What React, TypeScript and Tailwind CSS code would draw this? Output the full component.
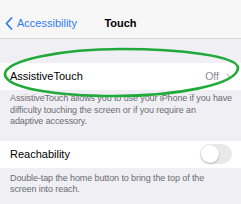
import React from 'react';

function BackChevron() {
  return (
    <svg width="8" height="13" viewBox="0 0 8 13" fill="none">
      <path d="M6.5 1L1.5 6.5L6.5 12" stroke="#2f7cf6" strokeWidth={1.8} strokeLinecap="round" strokeLinejoin="round" />
    </svg>
  );
}

function Toggle() {
  return (
    <div className="w-[32px] h-[20px] rounded-full bg-[#e9e9ea] p-[1px] flex items-center">
      <div className="w-[18px] h-[18px] rounded-full bg-white shadow-[0_1px_2px_rgba(0,0,0,0.25)]" />
    </div>
  );
}

export default function App() {
  return (
    <div className="relative w-[241px] h-[204px] overflow-hidden bg-[#efeff4] font-['Liberation_Sans',Arial,sans-serif]">
      {/* nav bar */}
      <div className="h-[39px] bg-[#f7f7f7] border-b border-[#d6d6d8] grid grid-cols-[1fr_auto_1fr] items-center pt-[8px]">
        <div className="flex items-center gap-[4px] pl-[5px]">
          <BackChevron />
          <span className="text-[11px] text-[#2f7cf6]">Accessibility</span>
        </div>
        <span className="text-[11px] font-semibold text-black">Touch</span>
        <div />
      </div>

      <div className="mt-[24px] h-[27px] bg-white flex items-center justify-between pl-[10px] pr-[10px]">
        <span className="text-[11px] text-black">AssistiveTouch</span>
        <div className="flex items-center gap-[7px]">
          <span className="text-[10.5px] text-[#8e8e93]">Off</span>
          <svg width="5" height="8" viewBox="0 0 5 8" fill="none">
            <path d="M1 1L4 4L1 7" stroke="#c4c4c8" strokeWidth={1.2} strokeLinecap="round" strokeLinejoin="round" />
          </svg>
        </div>
      </div>
      <p className="pl-[10px] pr-[4px] pt-[3px] text-[9px] leading-[11.5px] tracking-[-0.1px] text-[#6d6d72]">
        AssistiveTouch allows you to use your iPhone if you have difficulty touching the screen or if you require an
        <br />
        adaptive accessory.
      </p>

      <div className="mt-[13px] h-[27px] bg-white flex items-center justify-between pl-[10px] pr-[9px]">
        <span className="text-[11px] text-black">Reachability</span>
        <Toggle />
      </div>
      <p className="pl-[10px] pr-[4px] pt-[5px] text-[9px] leading-[11.5px] tracking-[-0.1px] text-[#6d6d72]">
        Double-tap the home button to bring the top of the
        <br />
        screen into reach.
      </p>

      {/* hand-drawn annotation */}
      <svg className="absolute left-0 top-0 pointer-events-none" width="241" height="204" viewBox="0 0 241 204" fill="none">
        <path
          d="M122 49 C 180 49, 238 56, 238 68 C 237 85, 175 96, 115 96 C 55 96, 5 88, 5 74 C 6 60, 62 49, 122 49 Z"
          stroke="#1faa3a"
          strokeWidth={2.7}
        />
      </svg>
    </div>
  );
}
